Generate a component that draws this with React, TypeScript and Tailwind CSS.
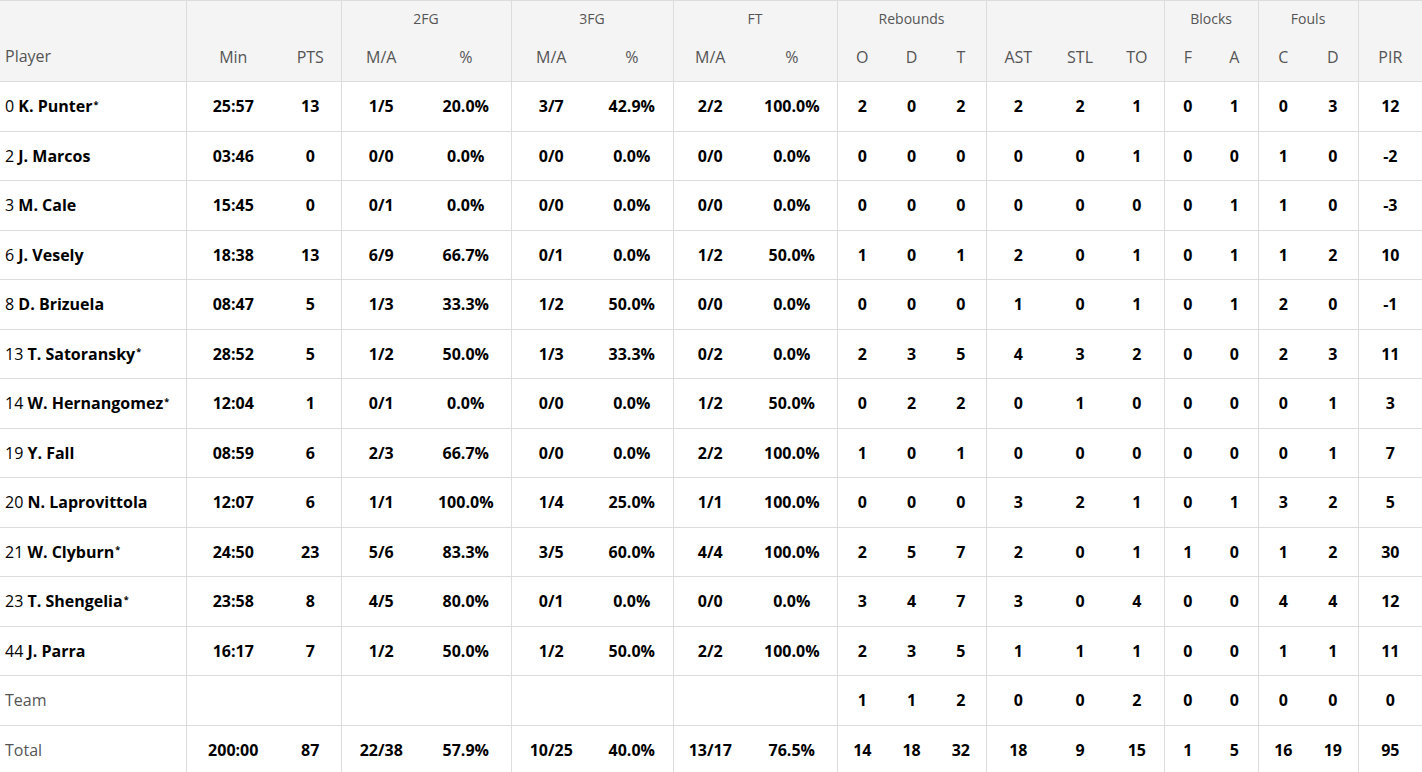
import React from "react";

type Row = {
    no?: string
    name: string
    starter?: boolean
    label?: boolean
    stats: string[]
}

// Min, PTS, 2FG M/A, %, 3FG M/A, %, FT M/A, %, O, D, T, AST, STL, TO, BF, BA, FC, FD, PIR
const rows: Row[] = [
    { no: '0', name: 'K. Punter', starter: true, stats: ['25:57', '13', '1/5', '20.0%', '3/7', '42.9%', '2/2', '100.0%', '2', '0', '2', '2', '2', '1', '0', '1', '0', '3', '12'] },
    { no: '2', name: 'J. Marcos', stats: ['03:46', '0', '0/0', '0.0%', '0/0', '0.0%', '0/0', '0.0%', '0', '0', '0', '0', '0', '1', '0', '0', '1', '0', '-2'] },
    { no: '3', name: 'M. Cale', stats: ['15:45', '0', '0/1', '0.0%', '0/0', '0.0%', '0/0', '0.0%', '0', '0', '0', '0', '0', '0', '0', '1', '1', '0', '-3'] },
    { no: '6', name: 'J. Vesely', stats: ['18:38', '13', '6/9', '66.7%', '0/1', '0.0%', '1/2', '50.0%', '1', '0', '1', '2', '0', '1', '0', '1', '1', '2', '10'] },
    { no: '8', name: 'D. Brizuela', stats: ['08:47', '5', '1/3', '33.3%', '1/2', '50.0%', '0/0', '0.0%', '0', '0', '0', '1', '0', '1', '0', '1', '2', '0', '-1'] },
    { no: '13', name: 'T. Satoransky', starter: true, stats: ['28:52', '5', '1/2', '50.0%', '1/3', '33.3%', '0/2', '0.0%', '2', '3', '5', '4', '3', '2', '0', '0', '2', '3', '11'] },
    { no: '14', name: 'W. Hernangomez', starter: true, stats: ['12:04', '1', '0/1', '0.0%', '0/0', '0.0%', '1/2', '50.0%', '0', '2', '2', '0', '1', '0', '0', '0', '0', '1', '3'] },
    { no: '19', name: 'Y. Fall', stats: ['08:59', '6', '2/3', '66.7%', '0/0', '0.0%', '2/2', '100.0%', '1', '0', '1', '0', '0', '0', '0', '0', '0', '1', '7'] },
    { no: '20', name: 'N. Laprovittola', stats: ['12:07', '6', '1/1', '100.0%', '1/4', '25.0%', '1/1', '100.0%', '0', '0', '0', '3', '2', '1', '0', '1', '3', '2', '5'] },
    { no: '21', name: 'W. Clyburn', starter: true, stats: ['24:50', '23', '5/6', '83.3%', '3/5', '60.0%', '4/4', '100.0%', '2', '5', '7', '2', '0', '1', '1', '0', '1', '2', '30'] },
    { no: '23', name: 'T. Shengelia', starter: true, stats: ['23:58', '8', '4/5', '80.0%', '0/1', '0.0%', '0/0', '0.0%', '3', '4', '7', '3', '0', '4', '0', '0', '4', '4', '12'] },
    { no: '44', name: 'J. Parra', stats: ['16:17', '7', '1/2', '50.0%', '1/2', '50.0%', '2/2', '100.0%', '2', '3', '5', '1', '1', '1', '0', '0', '1', '1', '11'] },
    { name: 'Team', label: true, stats: ['', '', '', '', '', '', '', '', '1', '1', '2', '0', '0', '2', '0', '0', '0', '0', '0'] },
    { name: 'Total', label: true, stats: ['200:00', '87', '22/38', '57.9%', '10/25', '40.0%', '13/17', '76.5%', '14', '18', '32', '18', '9', '15', '1', '5', '16', '19', '95'] },
]

const widths = [186, 94, 61, 80, 90, 80, 82, 74, 90, 50, 49, 50, 64, 60, 54, 47, 47, 50, 50, 64]

// stat column index after which a group border is drawn
const groupEnds = [1, 3, 5, 7, 10, 13, 15, 17]

const subHeads = ['Min', 'PTS', 'M/A', '%', 'M/A', '%', 'M/A', '%', 'O', 'D', 'T', 'AST', 'STL', 'TO', 'F', 'A', 'C', 'D', 'PIR']

const groups = [
    { label: '', span: 2 },
    { label: '2FG', span: 2 },
    { label: '3FG', span: 2 },
    { label: 'FT', span: 2 },
    { label: 'Rebounds', span: 3 },
    { label: '', span: 3 },
    { label: 'Blocks', span: 2 },
    { label: 'Fouls', span: 2 },
    { label: '', span: 1 },
]

function cellBorder(i: number) {
    return groupEnds.includes(i) ? 'border-r border-[#dcdcdc]' : ''
}

export default function App() {
    return (
        <div className="bg-white w-[1422px] h-[772px] overflow-hidden" style={{ fontFamily: '"Open Sans", "Liberation Sans", sans-serif' }}>
            <table className="table-fixed border-collapse w-[1422px]">
                <colgroup>
                    {widths.map((w, i) => (
                        <col key={i} style={{ width: w }} />
                    ))}
                </colgroup>
                <thead className="bg-[#f4f4f4] text-[#555]">
                    <tr className="h-[37px] border-t border-[#dcdcdc]">
                        <th rowSpan={2} className="border-r border-[#dcdcdc] text-left align-bottom pl-[5px] pb-[13px] font-normal text-[16px]">Player</th>
                        {groups.map((g, i) => (
                            <th key={i} colSpan={g.span} className={`font-normal text-[14px] pb-[1px] ${i < groups.length - 1 ? 'border-r border-[#dcdcdc]' : ''}`}>{g.label}</th>
                        ))}
                    </tr>
                    <tr className="h-[44px]">
                        {subHeads.map((h, i) => (
                            <th key={i} className={`font-normal text-[16px] pb-[4px] ${cellBorder(i)}`}>{h}</th>
                        ))}
                    </tr>
                </thead>
                <tbody>
                    {rows.map((r, ri) => (
                        <tr key={ri} className="h-[49.5px] border-t border-[#dcdcdc]">
                            <td className="border-r border-[#dcdcdc] pl-[5px] text-[16px] whitespace-nowrap">
                                {r.label ? (
                                    <span className="text-[#555]">{r.name}</span>
                                ) : (
                                    <span className="text-black">
                                        {r.no} <span className="font-bold">{r.name}</span>
                                        {r.starter && <sup className="font-bold text-[9px] ml-[1px]">*</sup>}
                                    </span>
                                )}
                            </td>
                            {r.stats.map((s, i) => (
                                <td key={i} className={`text-center font-bold text-[16px] text-black ${cellBorder(i)}`}>{s}</td>
                            ))}
                        </tr>
                    ))}
                </tbody>
            </table>
        </div>
    )
}
